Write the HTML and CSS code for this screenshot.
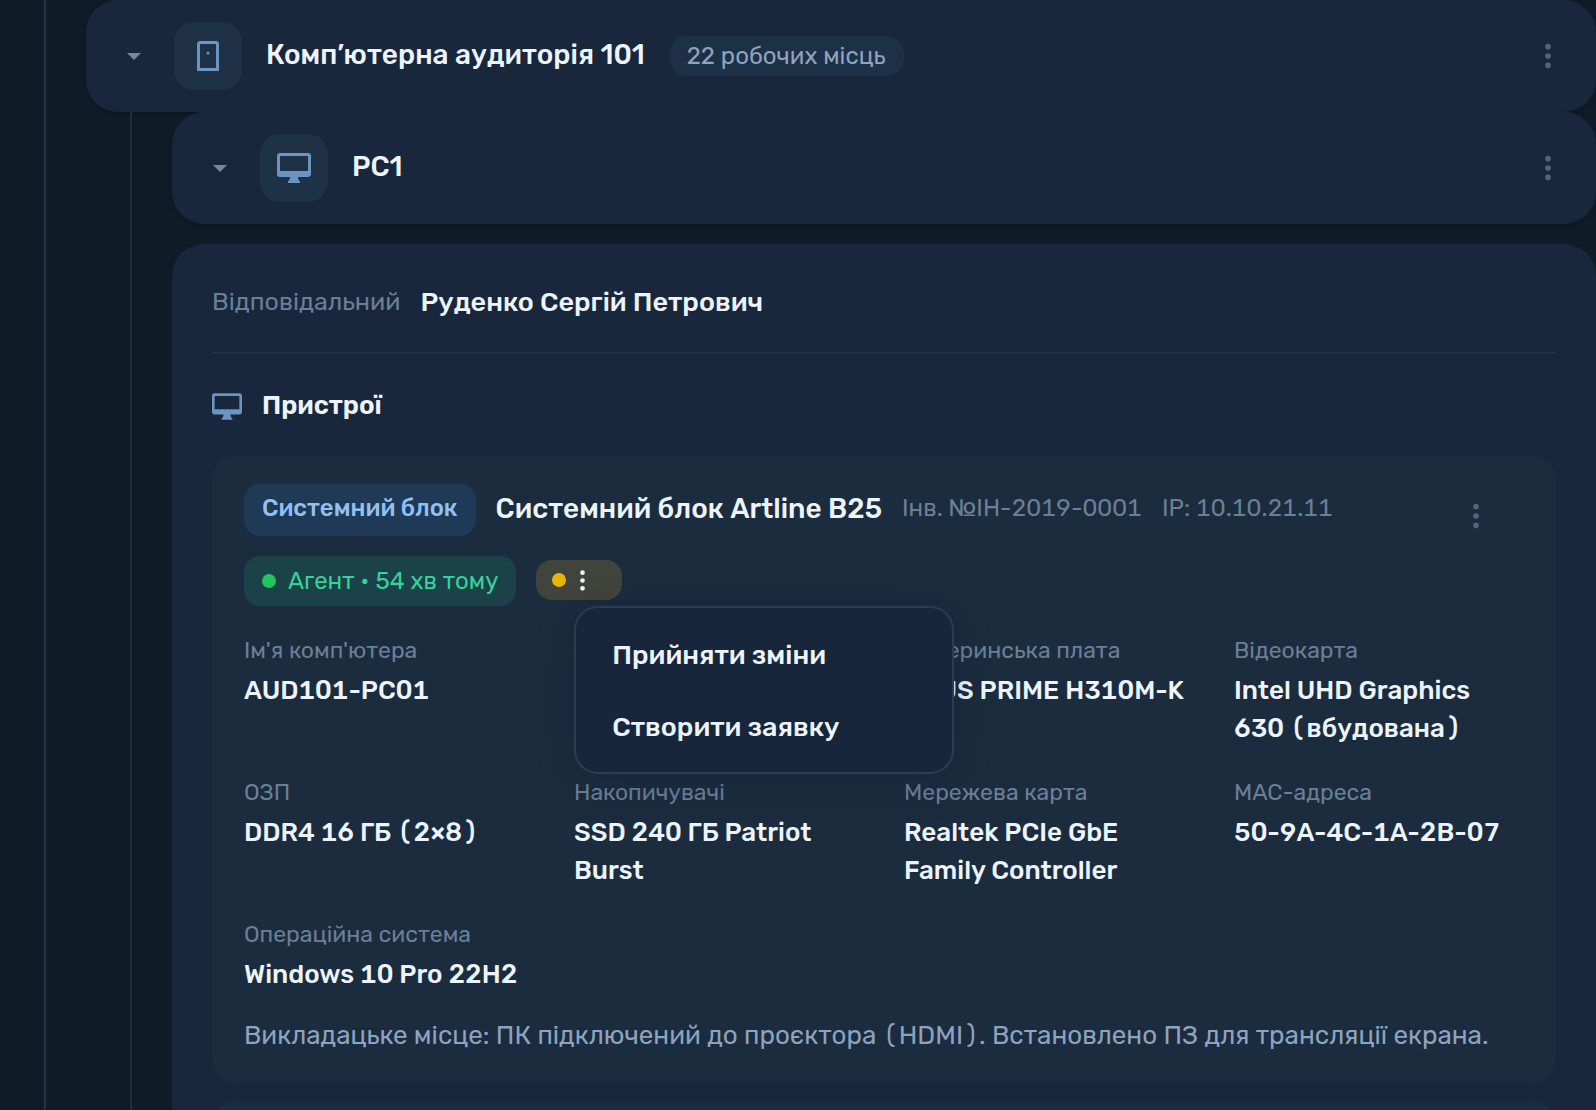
FILE: index.html
```
<!DOCTYPE html>
<html lang="uk">
    <head>
        <meta charset="utf-8">
        <title>Комп’ютерна аудиторія 101</title>
        <link rel="stylesheet" href="styles.css">
    </head>
    <body>
        <svg class="sprite" aria-hidden="true">
            <symbol id="dots" viewBox="0 0 16 16">
                <circle cx="8" cy="3" r="1.5"/>
                <circle cx="8" cy="8" r="1.5"/>
                <circle cx="8" cy="13" r="1.5"/>
            </symbol>
            <symbol id="monitor" viewBox="0 0 34 30">
                <path fill-rule="evenodd" d="M3 0h28a3 3 0 0 1 3 3v18a3 3 0 0 1-3 3h-10c0 2 .6 3.400 2 4.400V30H11v-1.600c1.400-1 2-2.400 2-4.400H3a3 3 0 0 1-3-3V3a3 3 0 0 1 3-3zM3 3v15h28V3z"/>
            </symbol>
            <symbol id="caret" viewBox="0 0 14 7">
                <path d="M0 0h14L7 7z"/>
            </symbol>
        </svg>
        <main class="page">
            <div class="level level-outer">
                <div class="row">
                    <button class="toggle" aria-label="Згорнути"><svg><use href="#caret"/></svg></button>
                    <span class="tile">
                        <svg class="icon-door" viewBox="0 0 22 30">
                            <path d="M1.500 28.500V3A1.500 1.500 0 0 1 3 1.500h16A1.500 1.500 0 0 1 20.500 3v25.500z" fill="none" stroke="currentColor" stroke-width="3"/>
                            <circle cx="11" cy="12" r="1.500"/>
                        </svg>
                    </span>
                    <h1 class="row-title">Комп’ютерна аудиторія 101</h1>
                    <span class="count">22 робочих місць</span>
                    <button class="more" aria-label="Меню"><svg><use href="#dots"/></svg></button>
                </div>
                <div class="level">
                    <div class="row">
                        <button class="toggle" aria-label="Згорнути"><svg><use href="#caret"/></svg></button>
                        <span class="tile"><svg class="icon-monitor"><use href="#monitor"/></svg></span>
                        <h2 class="row-title">PC1</h2>
                        <button class="more" aria-label="Меню"><svg><use href="#dots"/></svg></button>
                    </div>
                    <section class="panel">
                        <div class="owner">
                            <span class="owner-label">Відповідальний</span>
                            <span class="owner-name">Руденко Сергій Петрович</span>
                        </div>
                        <h3 class="section-title">
                            <svg class="icon-small"><use href="#monitor"/></svg>
                            Пристрої
                        </h3>
                        <article class="device">
                            <div class="device-head">
                                <div class="device-info">
                                    <span class="type">Системний блок</span>
                                    <h4 class="device-name">Системний блок Artline B25</h4>
                                    <span class="meta">Інв. №ІН-2019-0001</span>
                                    <span class="meta">IP: 10.10.21.11</span>
                                    <span class="agent"><i class="dot"></i>Агент • 54 хв тому</span>
                                    <div class="changes">
                                        <i class="dot dot-yellow"></i>
                                        <button class="changes-more" aria-label="Зміни"><svg><use href="#dots"/></svg></button>
                                        <div class="menu">
                                            <button>Прийняти зміни</button>
                                            <button>Створити заявку</button>
                                        </div>
                                    </div>
                                </div>
                                <button class="more" aria-label="Меню"><svg><use href="#dots"/></svg></button>
                            </div>
                            <dl class="specs">
                                <div><dt>Ім'я комп'ютера</dt><dd>AUD101-PC01</dd></div>
                                <div></div>
                                <div><dt>Материнська плата</dt><dd>ASUS PRIME H310M-K</dd></div>
                                <div><dt>Відеокарта</dt><dd>Intel UHD Graphics 630 (вбудована)</dd></div>
                                <div><dt>ОЗП</dt><dd>DDR4 16 ГБ (2×8)</dd></div>
                                <div><dt>Накопичувачі</dt><dd>SSD 240 ГБ Patriot Burst</dd></div>
                                <div><dt>Мережева карта</dt><dd>Realtek PCIe GbE Family Controller</dd></div>
                                <div><dt>MAC-адреса</dt><dd>50-9A-4C-1A-2B-07</dd></div>
                                <div><dt>Операційна система</dt><dd>Windows 10 Pro 22H2</dd></div>
                            </dl>
                            <p class="note">Викладацьке місце: ПК підключений до проєктора (HDMI). Встановлено ПЗ для трансляції екрана.</p>
                        </article>
                        <article class="device"></article>
                    </section>
                </div>
            </div>
        </main>
    </body>
</html>
```

FILE: styles.css
```
* {
    box-sizing: border-box;
}
body {
    margin: 0;
    background: #0f1b27;
    color: #edf4fd;
    font-family: Rubik, Roboto, sans-serif;
    font-size: 26px;
}
h1, h2, h3, h4, p, dl, dd {
    margin: 0;
}
button {
    border: none;
    padding: 0;
    background: none;
    color: inherit;
    font: inherit;
    cursor: pointer;
}
svg {
    display: block;
    fill: currentColor;
}
.sprite {
    display: none;
}
.page {
    height: 100vh;
    overflow: hidden;
}
.level {
    margin-left: 44px;
    border-left: 2px solid #1c2c3c;
    padding-left: 40px;
}
.level-outer {
    border-color: #22344b;
}
.row {
    display: flex;
    align-items: center;
    height: 112px;
    padding: 0 20px;
    border-radius: 32px;
    background: #18273b;
    box-shadow: 0 2px 4px rgba(0, 0, 0, 0.2);
}
.toggle {
    display: flex;
    align-items: center;
    justify-content: center;
    width: 56px;
    height: 56px;
    margin-right: 12px;
    color: #76869c;
}
.toggle svg {
    width: 14px;
    height: 7px;
}
.tile {
    display: flex;
    align-items: center;
    justify-content: center;
    width: 68px;
    height: 68px;
    margin-right: 24px;
    border-radius: 20px;
    background: #1f3146;
    color: #6a94c2;
}
.icon-door {
    width: 22px;
    height: 30px;
}
.icon-monitor {
    width: 34px;
    height: 30px;
}
.icon-small {
    width: 30px;
    height: 27px;
    color: #6a94c2;
}
.row-title {
    margin-right: 24px;
    padding-bottom: 4px;
    font-size: 28px;
    font-weight: 500;
}
.count {
    padding: 0 18px;
    border-radius: 18px;
    background: #1e3047;
    color: #8ea3bd;
    font-size: 24px;
    line-height: 40px;
}
.more {
    display: flex;
    align-items: center;
    justify-content: center;
    width: 56px;
    height: 56px;
    margin-left: auto;
    color: #53657b;
}
.more svg {
    width: 30px;
    height: 30px;
}
.panel {
    margin-top: 20px;
    padding: 40px;
    border-radius: 32px;
    background: #18273b;
}
.owner {
    display: flex;
    align-items: center;
    gap: 20px;
    padding-bottom: 32px;
    border-bottom: 2px solid #213247;
    line-height: 36px;
}
.owner-label {
    color: #6c7f95;
    font-size: 25px;
}
.owner-name {
    font-size: 27px;
    font-weight: 500;
}
.section-title {
    display: flex;
    align-items: center;
    gap: 20px;
    margin: 32px 0 30px;
    font-size: 26px;
    font-weight: 600;
    line-height: 40px;
}
.device {
    min-height: 120px;
    margin-bottom: 20px;
    padding: 28px 32px 26px;
    border-radius: 24px;
    background: #1b2c3f;
}
.device-head {
    display: flex;
    align-items: flex-start;
}
.device-head .more {
    margin: 4px 20px 0 0;
}
.device-info {
    flex: 1;
    display: flex;
    flex-wrap: wrap;
    align-items: center;
    gap: 20px;
}
.type {
    padding: 6px 18px 10px;
    border-radius: 16px;
    background: #1e3a57;
    color: #93c0f2;
    font-size: 24px;
    font-weight: 500;
    line-height: 36px;
}
.device-name {
    padding-bottom: 4px;
    font-size: 28px;
    font-weight: 500;
}
.meta {
    padding-bottom: 4px;
    color: #6c7f95;
    font-size: 24px;
    font-variant-numeric: tabular-nums;
}
.agent {
    display: flex;
    align-items: center;
    gap: 12px;
    padding: 0 18px;
    border-radius: 16px;
    background: #1b4249;
    color: #34d399;
    font-size: 24px;
    line-height: 50px;
}
.dot {
    width: 14px;
    height: 14px;
    border-radius: 50%;
    background: #22c55e;
}
.dot-yellow {
    background: #eab308;
}
.changes {
    position: relative;
    display: flex;
    align-items: center;
    gap: 4px;
    width: 86px;
    height: 40px;
    margin-bottom: 2px;
    padding: 0 16px;
    border-radius: 16px;
    background: #41443c;
}
.changes-more svg {
    width: 25px;
    height: 25px;
}
.menu {
    position: absolute;
    top: 46px;
    left: 38px;
    z-index: 1;
    width: 380px;
    padding: 11px 0 9px;
    border: 2px solid #2c3c51;
    border-radius: 24px;
    background: #18263b;
    box-shadow: 0 8px 40px rgba(15, 27, 39, 0.2);
}
.menu button {
    display: block;
    width: 100%;
    padding: 0 36px;
    font-size: 27px;
    font-weight: 500;
    line-height: 72px;
    text-align: left;
}
.specs {
    display: grid;
    grid-template-columns: repeat(4, 1fr);
    gap: 28px 40px;
    margin: 28px 0 22px;
    font-variant-numeric: tabular-nums;
}
.specs dt {
    margin-bottom: 6px;
    color: #6c7f95;
    font-size: 23px;
    line-height: 32px;
}
.specs dd {
    font-weight: 500;
    line-height: 38px;
}
.note {
    color: #8ea3bd;
    font-variant-numeric: tabular-nums;
    line-height: 40px;
}
```
